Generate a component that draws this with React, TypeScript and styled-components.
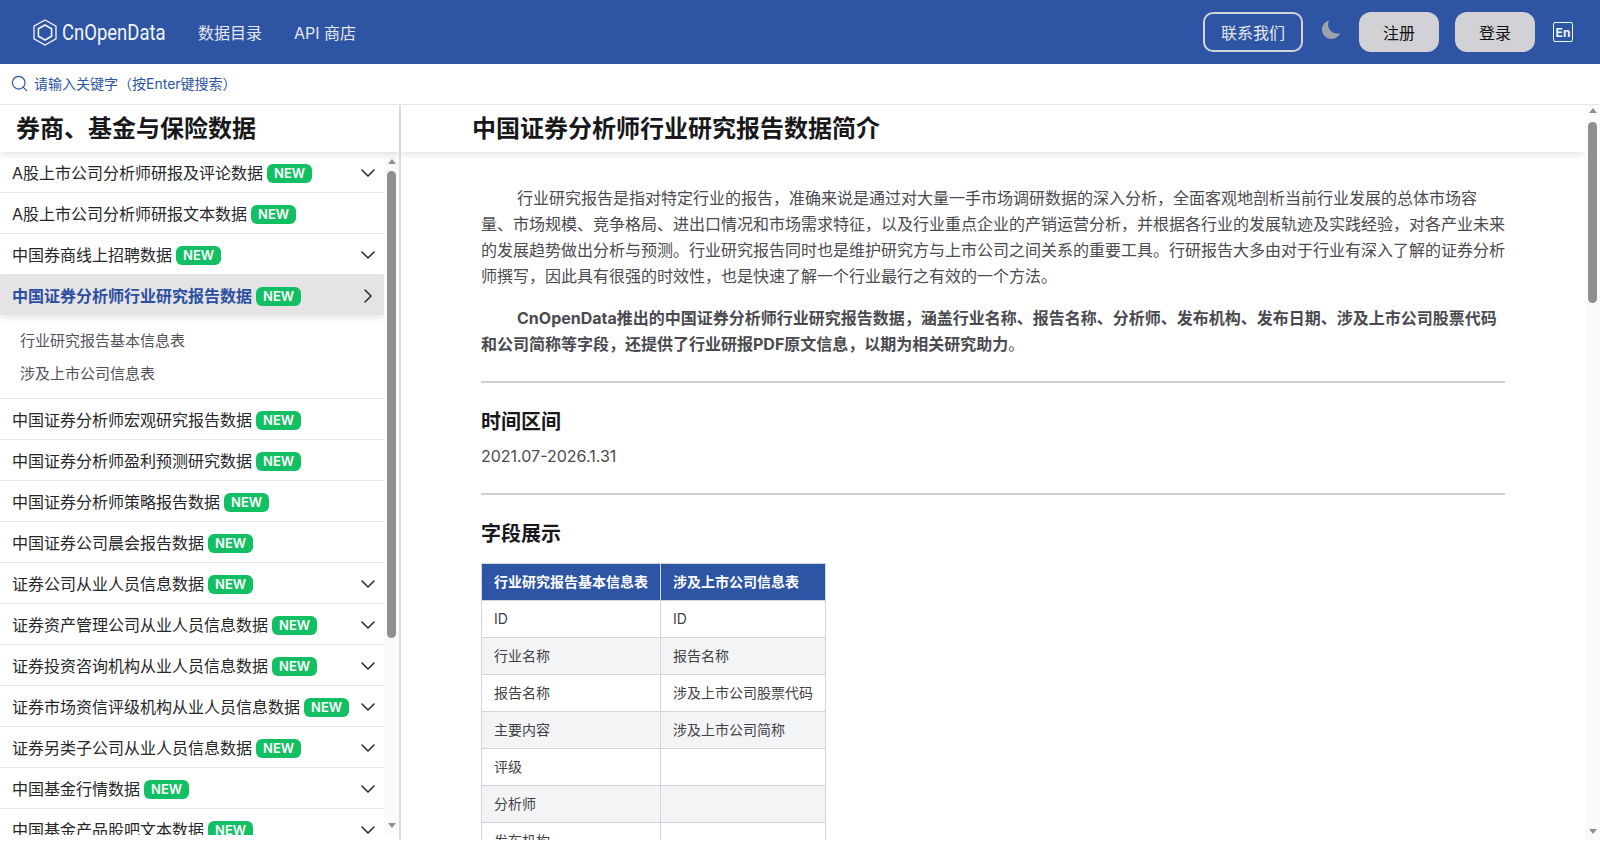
import React from 'react';
import styled, { createGlobalStyle } from 'styled-components';
import { ChevronDown, ChevronRight, Search } from 'lucide-react';

type NavItem = {
  label: string;
  expandable?: boolean;
  active?: boolean;
  children?: string[];
};

const navItems: NavItem[] = [
  { label: 'A股上市公司分析师研报及评论数据', expandable: true },
  { label: 'A股上市公司分析师研报文本数据' },
  { label: '中国券商线上招聘数据', expandable: true },
  {
    label: '中国证券分析师行业研究报告数据',
    expandable: true,
    active: true,
    children: ['行业研究报告基本信息表', '涉及上市公司信息表'],
  },
  { label: '中国证券分析师宏观研究报告数据' },
  { label: '中国证券分析师盈利预测研究数据' },
  { label: '中国证券分析师策略报告数据' },
  { label: '中国证券公司晨会报告数据' },
  { label: '证券公司从业人员信息数据', expandable: true },
  { label: '证券资产管理公司从业人员信息数据', expandable: true },
  { label: '证券投资咨询机构从业人员信息数据', expandable: true },
  { label: '证券市场资信评级机构从业人员信息数据', expandable: true },
  { label: '证券另类子公司从业人员信息数据', expandable: true },
  { label: '中国基金行情数据', expandable: true },
  { label: '中国基金产品股吧文本数据', expandable: true },
];

const tableRows = [
  ['ID', 'ID'],
  ['行业名称', '报告名称'],
  ['报告名称', '涉及上市公司股票代码'],
  ['主要内容', '涉及上市公司简称'],
  ['评级', ''],
  ['分析师', ''],
  ['发布机构', ''],
];

const GlobalStyle = createGlobalStyle`
  html, body {
    margin: 0;
    padding: 0;
    height: 100%;
    background: #fff;
    overflow: hidden;
  }
  body {
    font-family: Inter, "Noto Sans CJK SC", sans-serif;
    color: #18181b;
  }
  * {
    box-sizing: border-box;
  }
`;

const Page = styled.div`
  width: 100%;
  height: 857px;
  display: flex;
  flex-direction: column;
`;

const Header = styled.header`
  height: 64px;
  flex: none;
  display: flex;
  align-items: center;
  justify-content: space-between;
  padding: 0 27px 0 33px;
  background: #2d55a3;
`;

const HeaderGroup = styled.div`
  display: flex;
  align-items: center;
`;

const Logo = styled.a`
  display: flex;
  align-items: center;
  gap: 5px;
  margin-right: 32px;
  color: #f3f4f6;
`;

const LogoText = styled.span`
  display: inline-block;
  width: 104px;
  font-family: Roboto, sans-serif;
  font-size: 22px;
  font-weight: 400;
  white-space: nowrap;
  transform: scaleX(0.84);
  transform-origin: left center;
`;

const NavLink = styled.a`
  margin-right: 32px;
  font-size: 16px;
  color: #e5e7eb;
`;

const ContactButton = styled.button`
  width: 100px;
  height: 40px;
  margin-right: 19px;
  border: 2px solid #d1d5db;
  border-radius: 10px;
  background: transparent;
  color: #e5e7eb;
  font: inherit;
  font-size: 16px;
`;

const MoonButton = styled.span`
  display: flex;
  margin: -6px 18px 0 0;
  color: #9ca3af;
`;

const AuthButton = styled.button<{ $spaced?: boolean }>`
  width: 80px;
  height: 40px;
  margin-left: ${(p) => (p.$spaced ? '16px' : '0')};
  border: 0;
  border-radius: 12px;
  background: #d1d1d6;
  color: #111;
  font: inherit;
  font-size: 16px;
`;

const LangBadge = styled.span`
  width: 20px;
  height: 20px;
  margin-left: 18px;
  display: flex;
  align-items: center;
  justify-content: center;
  border: 1.5px solid #f3f4f6;
  border-radius: 2px;
  color: #f3f4f6;
  font-size: 12px;
  font-weight: 700;
`;

const SearchBar = styled.div`
  height: 40px;
  flex: none;
  display: flex;
  align-items: center;
  gap: 5px;
  padding: 0 0 2px 10px;
  color: #2d55a3;
  font-size: 14px;
`;

const Body = styled.div`
  height: 736px;
  flex: none;
  display: flex;
  border-top: 1px solid #e5e7eb;
`;

const Aside = styled.aside`
  width: 401px;
  flex: none;
  display: flex;
  flex-direction: column;
  border-right: 2px solid #dcdce0;
`;

const AsideTitle = styled.h2`
  position: relative;
  z-index: 1;
  height: 47px;
  flex: none;
  margin: 0;
  padding: 0 16px 5px;
  display: flex;
  align-items: center;
  font-size: 24px;
  font-weight: 700;
  box-shadow: 0 4px 6px -1px rgba(0, 0, 0, 0.1);
`;

const NavPane = styled.div`
  flex: 1;
  min-height: 0;
  margin-bottom: 5px;
  display: flex;
`;

const NavList = styled.ul`
  list-style: none;
  margin: 0;
  padding: 0;
  flex: 1;
  min-width: 0;
  overflow: hidden;
`;

const NavEntry = styled.li`
  border-bottom: 1px solid #e5e7eb;
`;

const NavRow = styled.div<{ $active?: boolean }>`
  height: 40px;
  display: flex;
  align-items: center;
  padding: 0 12px;
  font-size: 16px;
  white-space: nowrap;
  color: ${(p) => (p.$active ? '#2d4f9e' : '#27272a')};
  font-weight: ${(p) => (p.$active ? 600 : 400)};
  background: ${(p) => (p.$active ? '#e4e4e7' : 'transparent')};
  box-shadow: ${(p) => (p.$active ? '0 4px 6px -1px rgba(0, 0, 0, 0.1)' : 'none')};
`;

const NewBadge = styled.span`
  margin: 2px 0 0 4px;
  height: 19px;
  padding: 0 7px;
  display: inline-flex;
  align-items: center;
  border-radius: 6px;
  background: #12bf62;
  color: #fff;
  font-size: 13px;
  font-weight: 600;
`;

const RowIcon = styled.span`
  margin: 2px -8px 0 auto;
  display: flex;
  color: #27272a;
`;

const SubList = styled.div`
  padding: 8px 20px 9px;
  display: flex;
  flex-direction: column;
`;

const SubItem = styled.a`
  height: 33px;
  display: flex;
  align-items: center;
  font-size: 15px;
  color: #52525b;
`;

const ScrollTrack = styled.div`
  width: 15px;
  flex: none;
  display: flex;
  flex-direction: column;
  align-items: center;
  background: #fafafa;
`;

const ScrollThumb = styled.div<{ $top: number; $height: number }>`
  width: 9px;
  height: ${(p) => p.$height}px;
  margin-top: ${(p) => p.$top}px;
  margin-bottom: auto;
  border-radius: 5px;
  background: #8f8f8f;
`;

const ArrowUp = styled.span<{ $gap: number }>`
  flex: none;
  width: 0;
  height: 0;
  margin-top: ${(p) => p.$gap}px;
  border-left: 4.5px solid transparent;
  border-right: 4.5px solid transparent;
  border-bottom: 5px solid #8f8f8f;
`;

const ArrowDown = styled.span<{ $gap: number }>`
  flex: none;
  width: 0;
  height: 0;
  margin-bottom: ${(p) => p.$gap}px;
  border-left: 4.5px solid transparent;
  border-right: 4.5px solid transparent;
  border-top: 5px solid #8f8f8f;
`;

const ContentPane = styled.div`
  flex: 1;
  min-width: 0;
  display: flex;
`;

const Content = styled.main`
  flex: 1;
  min-width: 0;
  overflow: hidden;
`;

const ContentTitle = styled.h1`
  position: relative;
  z-index: 1;
  height: 47px;
  margin: 0;
  padding: 0 0 5px 71px;
  display: flex;
  align-items: center;
  background: #fff;
  font-size: 24px;
  font-weight: 700;
  box-shadow: 0 4px 6px -1px rgba(0, 0, 0, 0.1);
`;

const Article = styled.article`
  width: 1024px;
  margin: 0 auto;
  padding-top: 33px;
  color: #4a4a50;
`;

const Paragraph = styled.p`
  margin: 0 0 16px;
  font-size: 16px;
  line-height: 26px;
  text-indent: 36px;
`;

const Rule = styled.hr`
  height: 2px;
  margin: 24px 0 25px;
  border: 0;
  background: #d1d1d6;
`;

const SectionTitle = styled.h3`
  margin: 0 0 7px;
  font-size: 20px;
  line-height: 28px;
  font-weight: 600;
  color: #18181b;
`;

const PlainText = styled.p`
  margin: 0;
  font-size: 16px;
  line-height: 26px;
`;

const FieldTable = styled.table`
  margin-top: 15px;
  border-collapse: collapse;
  font-size: 14px;
`;

const HeadCell = styled.th`
  height: 37px;
  padding: 0 12px 2px;
  border: 1px solid #d1d5db;
  background: #2d55a3;
  color: #fff;
  font-weight: 600;
  text-align: left;
`;

const BodyRow = styled.tr`
  &:nth-child(even) {
    background: #f3f4f6;
  }
`;

const BodyCell = styled.td`
  height: 37px;
  padding: 0 12px 2px;
  border: 1px solid #d1d5db;
  color: #3f3f46;
`;

const LogoMark = () => (
  <svg width="24" height="27" viewBox="0 0 24 27" fill="none" stroke="#f3f4f6" strokeWidth="1.3">
    <path d="M12 1 L23 7.2 V19.8 L12 26 L1 19.8 V7.2 Z" />
    <path d="M12 6 L18.6 9.8 V17.2 L12 21 L5.4 17.2 V9.8 Z" strokeWidth="1.6" />
  </svg>
);

const MoonIcon = () => (
  <svg width="19" height="19" viewBox="0 0 19 19" fill="currentColor">
    <path d="M7.4 0.4 C3 1.3 0 5 0 9.4 C0 14.6 4.2 18.8 9.4 18.8 C13.5 18.8 16.9 16.3 18.4 12.9 C17.4 13.3 16.3 13.5 15.2 13.5 C10.1 13.5 6 9.4 6 4.3 C6 2.9 6.5 1.6 7.4 0.4 Z" />
  </svg>
);

const App = () => {
  return (
    <Page>
      <GlobalStyle />
      <Header>
        <HeaderGroup>
          <Logo>
            <LogoMark />
            <LogoText>CnOpenData</LogoText>
          </Logo>
          <NavLink>数据目录</NavLink>
          <NavLink>API 商店</NavLink>
        </HeaderGroup>
        <HeaderGroup>
          <ContactButton>联系我们</ContactButton>
          <MoonButton>
            <MoonIcon />
          </MoonButton>
          <AuthButton>注册</AuthButton>
          <AuthButton $spaced>登录</AuthButton>
          <LangBadge>En</LangBadge>
        </HeaderGroup>
      </Header>
      <SearchBar>
        <Search size={19} strokeWidth={1.5} />
        <span>请输入关键字（按Enter键搜索）</span>
      </SearchBar>
      <Body>
        <Aside>
          <AsideTitle>券商、基金与保险数据</AsideTitle>
          <NavPane>
            <NavList>
              {navItems.map((item) => (
                <NavEntry key={item.label}>
                  <NavRow $active={item.active}>
                    {item.label}
                    <NewBadge>NEW</NewBadge>
                    {item.expandable && (
                      <RowIcon>
                        {item.active ? (
                          <ChevronRight size={24} strokeWidth={1.5} />
                        ) : (
                          <ChevronDown size={24} strokeWidth={1.5} />
                        )}
                      </RowIcon>
                    )}
                  </NavRow>
                  {item.children && (
                    <SubList>
                      {item.children.map((child) => (
                        <SubItem key={child}>{child}</SubItem>
                      ))}
                    </SubList>
                  )}
                </NavEntry>
              ))}
            </NavList>
            <ScrollTrack>
              <ArrowUp $gap={7} />
              <ScrollThumb $top={7} $height={467} />
              <ArrowDown $gap={7} />
            </ScrollTrack>
          </NavPane>
        </Aside>
        <ContentPane>
          <Content>
            <ContentTitle>中国证券分析师行业研究报告数据简介</ContentTitle>
            <Article>
              <Paragraph>
                行业研究报告是指对特定行业的报告，准确来说是通过对大量一手市场调研数据的深入分析，全面客观地剖析当前行业发展的总体市场容量、市场规模、竞争格局、进出口情况和市场需求特征，以及行业重点企业的产销运营分析，并根据各行业的发展轨迹及实践经验，对各产业未来的发展趋势做出分析与预测。行业研究报告同时也是维护研究方与上市公司之间关系的重要工具。行研报告大多由对于行业有深入了解的证券分析师撰写，因此具有很强的时效性，也是快速了解一个行业最行之有效的一个方法。
              </Paragraph>
              <Paragraph>
                <strong>
                  CnOpenData推出的中国证券分析师行业研究报告数据，涵盖行业名称、报告名称、分析师、发布机构、发布日期、涉及上市公司股票代码和公司简称等字段，还提供了行业研报PDF原文信息，以期为相关研究助力
                </strong>
                。
              </Paragraph>
              <Rule />
              <SectionTitle>时间区间</SectionTitle>
              <PlainText>2021.07-2026.1.31</PlainText>
              <Rule />
              <SectionTitle>字段展示</SectionTitle>
              <FieldTable>
                <thead>
                  <tr>
                    <HeadCell>行业研究报告基本信息表</HeadCell>
                    <HeadCell>涉及上市公司信息表</HeadCell>
                  </tr>
                </thead>
                <tbody>
                  {tableRows.map((row) => (
                    <BodyRow key={row[0]}>
                      <BodyCell>{row[0]}</BodyCell>
                      <BodyCell>{row[1]}</BodyCell>
                    </BodyRow>
                  ))}
                </tbody>
              </FieldTable>
            </Article>
          </Content>
          <ScrollTrack>
            <ArrowUp $gap={3} />
            <ScrollThumb $top={9} $height={181} />
            <ArrowDown $gap={6} />
          </ScrollTrack>
        </ContentPane>
      </Body>
    </Page>
  );
};

export default App;
